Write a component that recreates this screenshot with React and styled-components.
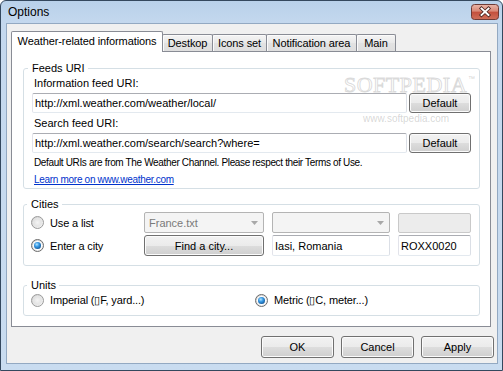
import React from "react";
import styled, { createGlobalStyle, css } from "styled-components";

const Global = createGlobalStyle`
  html, body { margin: 0; padding: 0; background: #ffffff; }
  body { font-family: "Liberation Sans", Arial, sans-serif; font-size: 11px; color: #000; }
  * { box-sizing: border-box; }
`;

const Window = styled.div`
  position: relative;
  width: 503px;
  height: 371px;
  display: flex;
  flex-direction: column;
  border: 1px solid #34485e;
  border-radius: 6px 6px 0 0;
  background: linear-gradient(to bottom, #b9d1ea 0px, #c4d8ee 22px, #c9dcf0 100%);
  padding: 0 4px 6px 5px;
  overflow: hidden;
`;

const TitleBar = styled.div`
  height: 22px;
  flex: none;
  display: flex;
  align-items: center;
  justify-content: space-between;
  padding-left: 2px;
`;

const Title = styled.span`
  font-family: "Liberation Sans", Arial, sans-serif;
  font-size: 12px;
  color: #000;
`;

const CloseBtn = styled.div`
  width: 28px;
  height: 16px;
  margin-right: -1px;
  display: flex;
`;

const Client = styled.div`
  flex: 1;
  display: flex;
  flex-direction: column;
  background: #f0f0f0;
  border: 1px solid #93a9c2;
  padding: 7px 3px 0 4px;
`;

const TabStrip = styled.div`
  display: flex;
  align-items: flex-end;
  height: 20px;
  flex: none;
`;

const Tab = styled.div`
  position: relative;
  width: ${(p) => p.$w}px;
  height: ${(p) => (p.$active ? 21 : 17)}px;
  margin-bottom: ${(p) => (p.$active ? -1 : 0)}px;
  margin-left: ${(p) => (p.$first ? 0 : -1)}px;
  z-index: ${(p) => (p.$active ? 2 : 1)};
  border: 1px solid #898c95;
  border-bottom: none;
  border-radius: 2px 2px 0 0;
  background: ${(p) => (p.$active ? "#ffffff" : "linear-gradient(to bottom, #f4f4f4, #e9e9e9 50%, #e2e2e2 51%, #dedede)")};
  box-shadow: ${(p) => (p.$active ? "none" : "inset 1px 1px 0 #fbfbfb")};
  display: flex;
  align-items: center;
  justify-content: center;
  font-size: 11px;
  letter-spacing: -0.1px;
  white-space: nowrap;
  padding-bottom: ${(p) => (p.$active ? 2 : 0)}px;
`;

const Panel = styled.div`
  height: 276px;
  flex: none;
  margin-right: 3px;
  border: 1px solid #898c95;
  background: #ffffff;
  padding: 10px 10px 0 11px;
  display: flex;
  flex-direction: column;
`;

const Group = styled.fieldset`
  margin: ${(p) => p.$mt || 0}px 0 0 0;
  min-width: 0;
  border: 1px solid #d5dfe5;
  border-radius: 3px;
  padding: ${(p) => p.$pt}px 8px ${(p) => p.$pb}px ${(p) => p.$pl}px;
  position: relative;
`;

const Legend = styled.legend`
  margin-left: -4px;
  padding: 0 3px 0 4px;
  font-size: 11px;
  line-height: 13px;
`;

const Label = styled.div`
  font-size: 11px;
  line-height: 13px;
  padding-left: 2px;
  margin-top: ${(p) => p.$mt || 0}px;
`;

const FieldRow = styled.div`
  display: grid;
  grid-template-columns: 1fr 62px;
  column-gap: 2px;
  margin-top: 3px;
  align-items: center;
`;

const TextBox = styled.input`
  height: ${(p) => p.$h || 20}px;
  width: 100%;
  min-width: 0;
  border: 1px solid;
  border-color: #abadb3 #dbdfe6 #e3e9ef #e2e3ea;
  border-radius: 2px;
  background: #ffffff;
  padding: 0 2px;
  font-family: "Liberation Sans", Arial, sans-serif;
  font-size: 11px;
  color: #000;
  outline: none;
  ${(p) =>
    p.disabled &&
    css`
      background: #ececec;
      border-color: #c9c9c9;
    `}
`;

const Button = styled.button`
  height: ${(p) => p.$h || 20}px;
  width: ${(p) => (p.$w ? `${p.$w}px` : "100%")};
  border: 1px solid #707070;
  border-radius: 3px;
  background: linear-gradient(to bottom, #f2f2f2 0%, #ebebeb 50%, #dddddd 51%, #cfcfcf 100%);
  box-shadow: inset 0 0 0 1px #fbfbfb;
  font-family: "Liberation Sans", Arial, sans-serif;
  font-size: 11px;
  color: #000;
  padding: 0;
  cursor: default;
`;

const Note = styled.div`
  font-size: 10px;
  line-height: 12px;
  letter-spacing: -0.35px;
  padding-left: 2px;
  margin-top: 4px;
  white-space: nowrap;
`;

const Link = styled.a`
  display: block;
  font-size: 10px;
  line-height: 12px;
  letter-spacing: -0.3px;
  padding-left: 2px;
  margin-top: 5px;
  color: #0033cc;
  text-decoration: underline;
  width: max-content;
`;

const CityGrid = styled.div`
  display: grid;
  grid-template-columns: 105px 120px 118px 73px;
  grid-auto-rows: 21px;
  column-gap: 8px;
  row-gap: 2px;
  align-items: center;
`;

const RadioLabel = styled.label`
  display: flex;
  align-items: center;
  gap: 6px;
  font-size: 11px;
  letter-spacing: -0.15px;
  white-space: nowrap;
`;

const RadioMark = styled.span`
  width: 13px;
  height: 13px;
  flex: none;
  border-radius: 50%;
  border: 1px solid ${(p) => (p.$checked ? "#6c6c6c" : "#9a9a9a")};
  background: linear-gradient(135deg, #d0d0d0, #f8f8f8);
  display: inline-flex;
  align-items: center;
  justify-content: center;
  &::after {
    content: "";
    width: 7px;
    height: 7px;
    border-radius: 50%;
    background: ${(p) =>
      p.$checked
        ? "radial-gradient(circle at 40% 35%, #b4e6ff 0, #3a9be6 35%, #0d4f8f 85%)"
        : "radial-gradient(circle at 50% 50%, #f4f4f4 0, #dedede 100%)"};
    box-shadow: ${(p) => (p.$checked ? "0 0 0 1px #ffffff" : "0 0 0 1px #e6e6e6")};
  }
`;

const Combo = styled.div`
  height: 21px;
  border: 1px solid #b4b4b4;
  border-radius: 2px;
  background: #f4f4f4;
  color: #7a7a7a;
  display: flex;
  align-items: center;
  justify-content: space-between;
  padding: 0 5px 0 4px;
  font-size: 11px;
`;

const UnitsRow = styled.div`
  display: grid;
  grid-template-columns: 224px 1fr;
  align-items: center;
  height: 13px;
`;

const ButtonRow = styled.div`
  display: flex;
  justify-content: flex-end;
  gap: 7px;
  margin-top: 9px;
`;

const Watermark = styled.div`
  position: absolute;
  left: ${(p) => p.$x}px;
  top: ${(p) => p.$y}px;
  font-family: ${(p) => (p.$big ? '"Liberation Serif", serif' : '"Liberation Sans", Arial, sans-serif')};
  font-size: ${(p) => p.$size}px;
  line-height: ${(p) => (p.$big ? "16px" : "11px")};
  height: ${(p) => (p.$big ? "16px" : "11px")};
  letter-spacing: ${(p) => (p.$big ? 0.5 : 0)}px;
  color: ${(p) => (p.$big ? "rgba(255,255,255,0.4)" : "rgba(120,120,120,0.3)")};
  -webkit-text-stroke: ${(p) => (p.$big ? "1px rgba(150,150,150,0.35)" : "0")};
  pointer-events: none;
  white-space: nowrap;
`;

const TradeMark = styled.span`
  display: inline-block;
  font-family: "Liberation Sans", Arial, sans-serif;
  font-size: 7px;
  line-height: 0;
  vertical-align: top;
  transform: translateY(2px);
  margin-left: 1px;
  -webkit-text-stroke: 0;
  color: rgba(120, 120, 120, 0.35);
`;

const Arrow = () => (
  <svg width="7" height="4" viewBox="0 0 7 4">
    <polygon points="0,0 7,0 3.5,4" fill="#a8a8a8" />
  </svg>
);

const Radio = ({ checked, children }) => (
  <RadioLabel>
    <RadioMark $checked={checked} />
    {children}
  </RadioLabel>
);

export default function App() {
  return (
    <>
      <Global />
      <Window>
        <TitleBar>
          <Title>Options</Title>
          <CloseBtn>
            <svg width="28" height="16" viewBox="0 0 28 16">
              <defs>
                <linearGradient id="closeGrad" x1="0" y1="0" x2="0" y2="1">
                  <stop offset="0" stopColor="#eab7aa" />
                  <stop offset="0.45" stopColor="#d98775" />
                  <stop offset="0.5" stopColor="#c34f3c" />
                  <stop offset="1" stopColor="#cf6f5a" />
                </linearGradient>
              </defs>
              <rect x="0.5" y="0.5" width="27" height="15" rx="3" fill="url(#closeGrad)" stroke="#6e3b36" />
              <path d="M10.5 4.5 L17.5 11 M17.5 4.5 L10.5 11" stroke="#4b2623" strokeWidth="3.6" strokeLinecap="square" />
              <path d="M10.5 4.5 L17.5 11 M17.5 4.5 L10.5 11" stroke="#ffffff" strokeWidth="1.9" strokeLinecap="square" />
            </svg>
          </CloseBtn>
        </TitleBar>
        <Client>
          <TabStrip>
            <Tab $active $first $w={152}>Weather-related informations</Tab>
            <Tab $w={51}>Destkop</Tab>
            <Tab $w={55}>Icons set</Tab>
            <Tab $w={91}>Notification area</Tab>
            <Tab $w={40}>Main</Tab>
          </TabStrip>
          <Panel>
            <Group $pt={2} $pb={2} $pl={8}>
              <Legend>Feeds URI</Legend>
              <Label>Information feed URI:</Label>
              <FieldRow>
                <TextBox readOnly value="http://xml.weather.com/weather/local/" />
                <Button>Default</Button>
              </FieldRow>
              <Label $mt={4}>Search feed URI:</Label>
              <FieldRow>
                <TextBox readOnly value="http://xml.weather.com/search/search?where=" />
                <Button>Default</Button>
              </FieldRow>
              <Note>Default URIs are from The Weather Channel. Please respect their Terms of Use.</Note>
              <Link href="#">Learn more on www.weather.com</Link>
            </Group>
            <Group $mt={9} $pt={1} $pb={9} $pl={7}>
              <Legend>Cities</Legend>
              <CityGrid>
                <Radio>Use a list</Radio>
                <Combo>
                  <span>France.txt</span>
                  <Arrow />
                </Combo>
                <Combo>
                  <span />
                  <Arrow />
                </Combo>
                <TextBox disabled readOnly value="" $h={20} />
                <Radio checked>Enter a city</Radio>
                <Button $h={21}>Find a city...</Button>
                <TextBox readOnly value="Iasi, Romania" $h={21} />
                <TextBox readOnly value="ROXX0020" $h={21} />
              </CityGrid>
            </Group>
            <Group $mt={13} $pt={2} $pb={8} $pl={7}>
              <Legend>Units</Legend>
              <UnitsRow>
                <Radio>Imperial (▯F, yard...)</Radio>
                <Radio checked>Metric (▯C, meter...)</Radio>
              </UnitsRow>
            </Group>
          </Panel>
          <ButtonRow>
            <Button $w={73} $h={22}>OK</Button>
            <Button $w={73} $h={22}>Cancel</Button>
            <Button $w={73} $h={22}>Apply</Button>
          </ButtonRow>
        </Client>
        <Watermark $big $size={22} $x={343} $y={76}>
          SOFTPEDIA<TradeMark>™</TradeMark>
        </Watermark>
        <Watermark $size={10} $x={362} $y={112}>www.softpedia.com</Watermark>
      </Window>
    </>
  );
}
